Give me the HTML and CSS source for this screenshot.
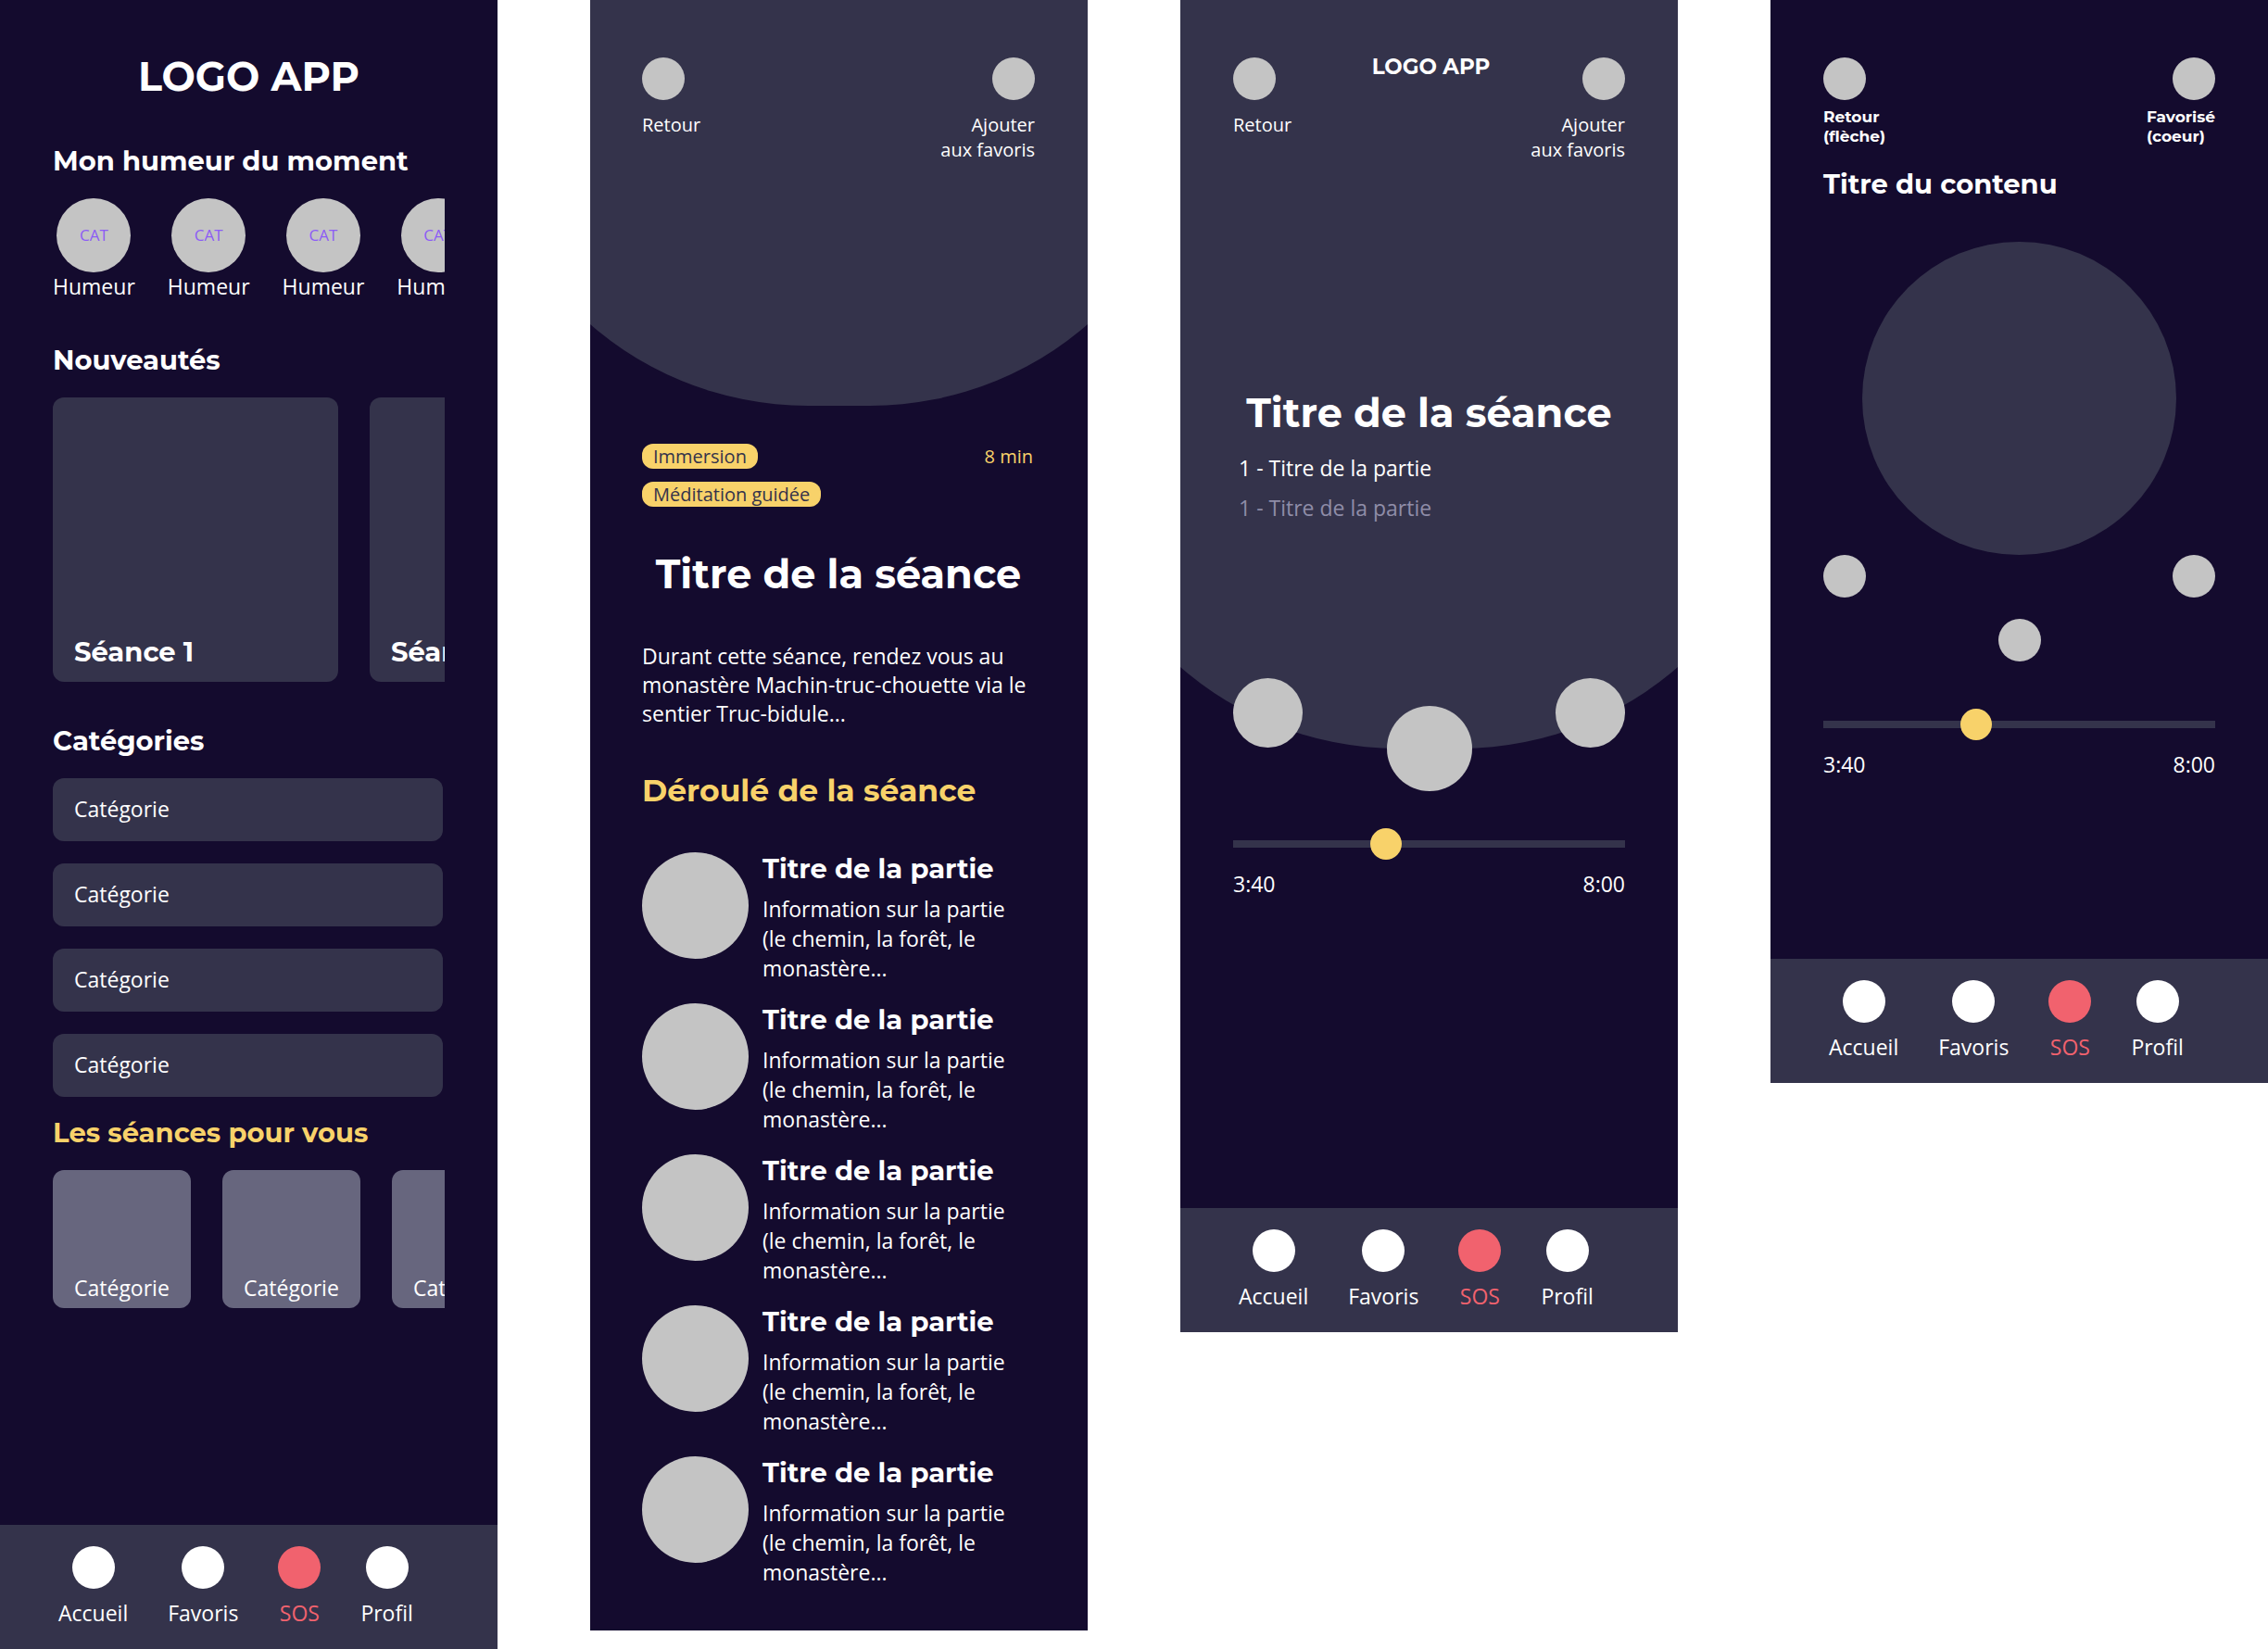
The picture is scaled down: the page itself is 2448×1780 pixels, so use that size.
FILE: index.html
```html
<!DOCTYPE html>
<html lang="fr">
<head>
  <meta charset="utf-8">
  <meta name="viewport" content="width=device-width, initial-scale=1">
  <title>Logo App</title>
  <link rel="stylesheet" href="styles.css">
</head>
<body>
  <div class="board">

    <section class="screen">
      <main class="home">
        <h1 class="title">LOGO APP</h1>

        <section class="block">
          <h2 class="heading">Mon humeur du moment</h2>
          <div class="moods">
            <button class="mood" type="button"><span class="mood-icon">CAT</span>Humeur</button>
            <button class="mood" type="button"><span class="mood-icon">CAT</span>Humeur</button>
            <button class="mood" type="button"><span class="mood-icon">CAT</span>Humeur</button>
            <button class="mood" type="button"><span class="mood-icon">CAT</span>Humeur</button>
          </div>
        </section>

        <section class="block">
          <h2 class="heading">Nouveautés</h2>
          <div class="carousel">
            <a class="session-card heading" href="#">Séance 1</a>
            <a class="session-card heading" href="#">Séance 2</a>
          </div>
        </section>

        <section class="block">
          <h2 class="heading">Catégories</h2>
          <div class="categories">
            <a class="category" href="#">Catégorie</a>
            <a class="category" href="#">Catégorie</a>
            <a class="category" href="#">Catégorie</a>
            <a class="category" href="#">Catégorie</a>
          </div>
        </section>

        <section class="block block-tight">
          <h2 class="heading heading-accent">Les séances pour vous</h2>
          <div class="carousel">
            <a class="pick-card" href="#">Catégorie</a>
            <a class="pick-card" href="#">Catégorie</a>
            <a class="pick-card" href="#">Catégorie</a>
          </div>
        </section>
      </main>
      <nav class="tabbar">
        <a class="tab" href="#"><span class="dot"></span>Accueil</a>
        <a class="tab" href="#"><span class="dot"></span>Favoris</a>
        <a class="tab tab-sos" href="#"><span class="dot"></span>SOS</a>
        <a class="tab" href="#"><span class="dot"></span>Profil</a>
      </nav>
    </section>

    <section class="screen">
      <header class="hero dome">
        <div class="topbar">
          <button class="action" type="button"><span class="dot"></span>Retour</button>
          <button class="action action-end" type="button"><span class="dot"></span>Ajouter<br>aux favoris</button>
        </div>
      </header>
      <main class="detail">
        <div class="meta">
          <div class="tags">
            <span class="tag">Immersion</span>
            <span class="tag">Méditation guidée</span>
          </div>
          <span class="duration">8 min</span>
        </div>
        <h1 class="title">Titre de la séance</h1>
        <p>Durant cette séance, rendez vous au monastère Machin-truc-chouette via le sentier Truc-bidule...</p>
        <h2 class="subtitle">Déroulé de la séance</h2>
        <ol class="parts">
          <li class="part">
            <span class="part-image"></span>
            <div class="part-text">
              <h3 class="heading">Titre de la partie</h3>
              <p class="copy">Information sur la partie (le chemin, la forêt, le monastère...</p>
            </div>
          </li>
          <li class="part">
            <span class="part-image"></span>
            <div class="part-text">
              <h3 class="heading">Titre de la partie</h3>
              <p class="copy">Information sur la partie (le chemin, la forêt, le monastère...</p>
            </div>
          </li>
          <li class="part">
            <span class="part-image"></span>
            <div class="part-text">
              <h3 class="heading">Titre de la partie</h3>
              <p class="copy">Information sur la partie (le chemin, la forêt, le monastère...</p>
            </div>
          </li>
          <li class="part">
            <span class="part-image"></span>
            <div class="part-text">
              <h3 class="heading">Titre de la partie</h3>
              <p class="copy">Information sur la partie (le chemin, la forêt, le monastère...</p>
            </div>
          </li>
          <li class="part">
            <span class="part-image"></span>
            <div class="part-text">
              <h3 class="heading">Titre de la partie</h3>
              <p class="copy">Information sur la partie (le chemin, la forêt, le monastère...</p>
            </div>
          </li>
        </ol>
      </main>
    </section>

    <section class="screen">
      <main class="player">
        <div class="stage dome">
          <div class="topbar">
            <button class="action" type="button"><span class="dot"></span>Retour</button>
            <span class="brand">LOGO APP</span>
            <button class="action action-end" type="button"><span class="dot"></span>Ajouter<br>aux favoris</button>
          </div>
          <h1 class="title stage-title">Titre de la séance</h1>
          <ol class="queue">
            <li>1 - Titre de la partie</li>
            <li class="queue-next">1 - Titre de la partie</li>
          </ol>
          <div class="controls">
            <button class="control" type="button" aria-label="Précédent"></button>
            <button class="control control-main" type="button" aria-label="Lecture"></button>
            <button class="control" type="button" aria-label="Suivant"></button>
          </div>
        </div>
        <div class="progress">
          <input class="slider" type="range" min="0" max="100" value="38" aria-label="Position dans la séance">
          <div class="times"><span>3:40</span><span>8:00</span></div>
        </div>
      </main>
      <nav class="tabbar">
        <a class="tab" href="#"><span class="dot"></span>Accueil</a>
        <a class="tab" href="#"><span class="dot"></span>Favoris</a>
        <a class="tab tab-sos" href="#"><span class="dot"></span>SOS</a>
        <a class="tab" href="#"><span class="dot"></span>Profil</a>
      </nav>
    </section>

    <section class="screen">
      <main class="content-player">
        <div class="topbar">
          <button class="action action-bold" type="button"><span class="dot"></span><span>Retour<br>(flèche)</span></button>
          <button class="action action-bold action-heart" type="button"><span class="dot"></span><span>Favorisé<br>(coeur)</span></button>
        </div>
        <h1 class="heading content-title">Titre du contenu</h1>
        <div class="disc"></div>
        <div class="controls controls-small">
          <button class="control" type="button" aria-label="Précédent"></button>
          <button class="control control-main" type="button" aria-label="Lecture"></button>
          <button class="control" type="button" aria-label="Suivant"></button>
        </div>
        <div class="progress progress-low">
          <input class="slider" type="range" min="0" max="100" value="38" aria-label="Position dans le contenu">
          <div class="times"><span>3:40</span><span>8:00</span></div>
        </div>
      </main>
      <nav class="tabbar">
        <a class="tab" href="#"><span class="dot"></span>Accueil</a>
        <a class="tab" href="#"><span class="dot"></span>Favoris</a>
        <a class="tab tab-sos" href="#"><span class="dot"></span>SOS</a>
        <a class="tab" href="#"><span class="dot"></span>Profil</a>
      </nav>
    </section>

  </div>
</body>
</html>
```
FILE: styles.css
```css
:root {
  --night: #140b2e;
  --slate: #34334b;
  --mist: #67667e;
  --grey: #c4c4c4;
  --yellow: #f8d26a;
  --red: #f1626e;
  --violet: #8c5cf5;
  --display: Montserrat, Inter, sans-serif;
  --text: "Open Sans", sans-serif;
  --edge: 57px;
}

* {
  box-sizing: border-box;
}

body {
  margin: 0;
  background: #fff;
  color: #fff;
  font: 400 23px/31px var(--text);
}

h1, h2, h3, p, ol {
  margin: 0;
  padding: 0;
}

ol {
  list-style: none;
}

a {
  color: inherit;
  text-decoration: none;
}

button {
  padding: 0;
  border: 0;
  background: none;
  color: inherit;
  font: inherit;
  cursor: pointer;
}

.board {
  display: grid;
  grid-template-columns: repeat(4, minmax(0, 1fr));
  gap: 100px;
  align-items: start;
}

.screen {
  background: var(--night);
  overflow: hidden;
}

/* Type */

.title {
  font: 700 43px/54px var(--display);
  text-align: center;
}

.subtitle {
  color: var(--yellow);
  font: 700 33px/42px var(--display);
}

.heading {
  font: 700 29px/35px var(--display);
}

.heading-accent {
  color: var(--yellow);
}

.brand {
  padding-left: 4px;
  font: 700 23px/20px var(--display);
}

.copy {
  line-height: 32px;
}

/* Shared pieces */

.dot {
  width: 46px;
  height: 46px;
  flex: none;
  border-radius: 50%;
  background: var(--grey);
}

.topbar {
  display: grid;
  grid-auto-flow: column;
  grid-auto-columns: auto;
  justify-content: space-between;
  align-items: start;
}

.action {
  display: flex;
  flex-direction: column;
  align-items: flex-start;
  gap: 13px;
  font-size: 20px;
  line-height: 27px;
  text-align: left;
}

.action-end {
  display: block;
  text-align: right;
}

.action-end .dot {
  display: block;
  margin: 0 0 13px auto;
}

.action-bold {
  gap: 8px;
  font: 700 17px/21px var(--display);
}

.action-heart {
  align-items: flex-end;
}

.dome {
  position: relative;
  z-index: 0;
}

.dome::before {
  content: "";
  position: absolute;
  z-index: -1;
  inset: 0 -123px;
  border-radius: 0 0 358px 358px;
  background: var(--slate);
}

.tabbar {
  display: flex;
  gap: 43px;
  padding: 23px 63px;
  background: var(--slate);
}

.tab {
  display: flex;
  flex-direction: column;
  align-items: center;
  gap: 11px;
}

.tab .dot {
  background: #fff;
}

.tab-sos {
  color: var(--red);
}

.tab-sos .dot {
  background: var(--red);
}

/* Home */

.home {
  display: flex;
  flex-direction: column;
  gap: 46px;
  padding: 56px var(--edge) 234px;
}

.block {
  display: flex;
  flex-direction: column;
  gap: 23px;
}

.block-tight {
  margin-top: -25px;
}

.moods {
  display: flex;
  gap: 35px;
  overflow: hidden;
}

.mood {
  display: flex;
  flex: none;
  flex-direction: column;
  align-items: center;
}

.mood-icon {
  width: 80px;
  height: 80px;
  border-radius: 50%;
  background: var(--grey);
  color: var(--violet);
  font-size: 17px;
  line-height: 80px;
}

.carousel {
  display: flex;
  gap: 34px;
  overflow: hidden;
}

.session-card,
.pick-card {
  display: flex;
  flex: none;
  align-items: flex-end;
  border-radius: 12px;
}

.session-card {
  width: 308px;
  height: 307px;
  padding: 0 23px 15px;
  background: var(--slate);
}

.pick-card {
  width: 149px;
  height: 149px;
  padding: 0 23px 6px;
  background: var(--mist);
}

.categories {
  display: flex;
  flex-direction: column;
  gap: 24px;
  padding-right: 2px;
}

.category {
  padding: 18px 23px 19px;
  border-radius: 12px;
  background: var(--slate);
}

/* Session detail */

.hero {
  min-height: 438px;
  padding: 62px 57px 0 56px;
}

.detail {
  display: flex;
  flex-direction: column;
  gap: 46px;
  padding: 41px 57px 47px 56px;
}

.meta {
  display: flex;
  justify-content: space-between;
  font-size: 20px;
  line-height: 27px;
}

.tags {
  display: flex;
  flex-direction: column;
  align-items: flex-start;
  gap: 14px;
}

.tag {
  padding: 0 12px;
  border-radius: 12px;
  background: var(--yellow);
  color: var(--slate);
}

.duration {
  padding-right: 2px;
  color: var(--yellow);
}

.parts {
  display: flex;
  flex-direction: column;
  gap: 22px;
}

.part {
  display: flex;
  gap: 15px;
}

.part-image {
  width: 115px;
  height: 115px;
  flex: none;
  border-radius: 50%;
  background: var(--grey);
}

.part-text {
  display: flex;
  flex: 1;
  flex-direction: column;
  gap: 10px;
  padding-right: 16px;
}

/* Players */

.player {
  padding-bottom: 334px;
}

.stage {
  padding: 62px var(--edge) 0;
}

.stage::before {
  bottom: 46px;
}

.stage .topbar {
  grid-template-columns: 1fr auto 1fr;
}

.stage .action-end {
  justify-self: end;
}

.stage-title {
  margin-top: 244px;
}

.queue {
  display: flex;
  flex-direction: column;
  gap: 12px;
  margin-top: 17px;
  padding-left: 6px;
}

.queue-next {
  color: #8f8da8;
}

.controls {
  display: flex;
  align-items: flex-start;
  justify-content: space-between;
  margin-top: 168px;
}

.control {
  width: 75px;
  height: 75px;
  border-radius: 50%;
  background: var(--grey);
}

.control-main {
  width: 92px;
  height: 92px;
  margin-top: 30px;
}

.progress {
  display: flex;
  flex-direction: column;
  gap: 11px;
  padding: 40px var(--edge) 0;
}

.slider {
  width: 100%;
  height: 34px;
  margin: 0;
  appearance: none;
  background: none;
}

.slider::-webkit-slider-runnable-track {
  height: 8px;
  background: var(--slate);
}

.slider::-webkit-slider-thumb {
  width: 34px;
  height: 34px;
  margin-top: -13px;
  appearance: none;
  border-radius: 50%;
  background: var(--yellow);
}

.times {
  display: flex;
  justify-content: space-between;
}

.content-player {
  padding: 62px var(--edge) 194px;
}

.content-title {
  margin-top: 23px;
}

.disc {
  width: 80%;
  aspect-ratio: 1;
  margin: 45px auto 0;
  border-radius: 50%;
  background: var(--slate);
}

.controls-small {
  margin-top: 0;
}

.controls-small .control {
  width: 46px;
  height: 46px;
}

.controls-small .control-main {
  margin-top: 69px;
}

.progress-low {
  padding: 51px 0 0;
}
```
